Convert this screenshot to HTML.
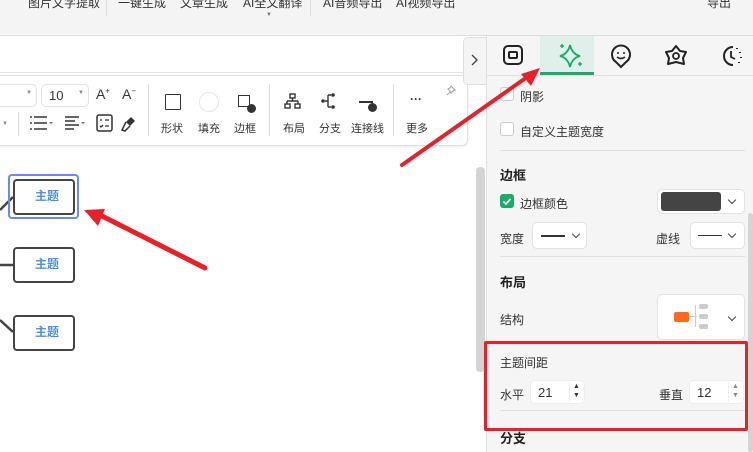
<!DOCTYPE html>
<html><head><meta charset="utf-8"><style>
*{margin:0;padding:0;box-sizing:border-box}
body{width:753px;height:452px;overflow:hidden;position:relative;background:#fff;font-family:"Liberation Sans","Noto Sans CJK SC",sans-serif;font-size:12px;color:#333}
.a{position:absolute}
.t{position:absolute;white-space:nowrap}
.sel{background:#fff;border:1px solid #e2e2e2;border-radius:5px}
.chev{position:absolute;width:6px;height:6px;border-right:1.5px solid #444;border-bottom:1.5px solid #444;transform:rotate(45deg)}
</style></head><body>
<div class="a" style="left:0;top:0;width:753px;height:36px;background:#f4f4f4;border-bottom:1px solid #ddd"></div>
<div class="t" style="left:28px;top:-6px;font-size:12px">图片文字提取</div>
<div class="a" style="left:106px;top:0;width:1px;height:16px;background:#ddd"></div>
<div class="t" style="left:118px;top:-6px">一键生成</div>
<div class="t" style="left:180px;top:-6px">文章生成</div>
<div class="t" style="left:243px;top:-6px">AI全文翻译</div>
<div class="t" style="left:266px;top:12px;font-size:6px;color:#777">▼</div>
<div class="a" style="left:310px;top:0;width:1px;height:16px;background:#ddd"></div>
<div class="t" style="left:323px;top:-6px">AI音频导出</div>
<div class="t" style="left:396px;top:-6px">AI视频导出</div>
<div class="t" style="left:707px;top:-6px">导出</div>

<div class="a" style="left:0;top:36px;width:486px;height:37px;background:#fff;border-bottom:1px solid #e4e4e4"></div>
<div class="a" style="left:-10px;top:75px;width:478px;height:71px;background:#fff;border:1px solid #e0e0e0;border-radius:6px;box-shadow:0 1px 3px rgba(0,0,0,.08)"></div>
<div class="sel a" style="left:-10px;top:84px;width:47px;height:23px"></div>
<div class="t" style="left:26px;top:90px;font-size:6px;color:#888">▼</div>
<div class="sel a" style="left:41px;top:84px;width:48px;height:23px"></div>
<div class="t" style="left:49px;top:88px;font-size:13px">10</div>
<div class="t" style="left:78px;top:90px;font-size:6px;color:#888">▼</div>
<div class="t" style="left:96px;top:86px;font-size:14px">A<sup style="font-size:8px">+</sup></div>
<div class="t" style="left:122px;top:86px;font-size:14px">A<sup style="font-size:8px">−</sup></div>
<div class="t" style="left:2px;top:121px;font-size:6px;color:#888">▼</div>
<div class="a" style="left:18px;top:112px;width:1px;height:24px;background:#ddd"></div>
<svg class="a" style="left:28px;top:112px" width="120" height="24">
<path d="M6 5h13M6 11h13M6 17h13" stroke="#333" stroke-width="1.6"/><path d="M3 4v2M3 10v2M3 16v2" stroke="#333" stroke-width="1.4"/><path d="M21 10l2 2 2-2z" fill="#666"/>
<path d="M37 5h14M37 9h10M37 13h14M37 17h9" stroke="#333" stroke-width="1.4"/><path d="M53 10l2 2 2-2z" fill="#666"/>
<rect x="69" y="3" width="15" height="16" rx="2" fill="none" stroke="#333" stroke-width="1.5"/><path d="M72 8h2M77 8h4M72 14l1 1 2-2M77 14h4" stroke="#333" stroke-width="1.3" fill="none"/>
<path d="M103 5l4 4-5 5-4-4z" fill="#333"/><path d="M98 10l-4 8 3 1 5-5" fill="none" stroke="#333" stroke-width="1.5"/>
</svg>
<div class="a" style="left:148px;top:84px;width:1px;height:52px;background:#ddd"></div>
<div class="a" style="left:165px;top:94px;width:16px;height:16px;border:1.5px solid #333;border-radius:1px"></div>
<div class="t" style="left:161px;top:120px;font-size:11px">形状</div>
<div class="a" style="left:199px;top:92px;width:20px;height:20px;border:1px solid #e5e5e5;border-radius:50%"></div>
<div class="t" style="left:198px;top:120px;font-size:11px">填充</div>
<div class="a" style="left:238px;top:95px;width:12px;height:12px;border:1.5px solid #333"></div>
<div class="a" style="left:247px;top:104px;width:9px;height:9px;background:#333;border-radius:50%"></div>
<div class="t" style="left:234px;top:120px;font-size:11px">边框</div>
<div class="a" style="left:269px;top:84px;width:1px;height:52px;background:#ddd"></div>
<svg class="a" style="left:280px;top:90px" width="100" height="22">
<rect x="10" y="4" width="5" height="4" fill="none" stroke="#333" stroke-width="1.4"/><path d="M12.5 8v3M7 11h11M7 11v3M18 11v3" stroke="#333" stroke-width="1.4" fill="none"/><rect x="5" y="14" width="5" height="4" fill="none" stroke="#333" stroke-width="1.4"/><rect x="15" y="14" width="5" height="4" fill="none" stroke="#333" stroke-width="1.4"/>
<circle cx="43" cy="11" r="1.8" fill="#333"/><path d="M45 11h3M48 5v12M48 5h3M48 17h3" stroke="#333" stroke-width="1.4" fill="none"/><circle cx="53" cy="5" r="1.8" fill="#333"/><circle cx="53" cy="17" r="1.8" fill="#333"/>
</svg>
<div class="t" style="left:283px;top:120px;font-size:11px">布局</div>
<div class="t" style="left:319px;top:120px;font-size:11px">分支</div>
<div class="a" style="left:359px;top:101px;width:14px;height:2px;background:#333"></div>
<div class="a" style="left:368px;top:103px;width:9px;height:9px;background:#333;border-radius:50%"></div>
<div class="t" style="left:351px;top:120px;font-size:11px">连接线</div>
<div class="a" style="left:393px;top:84px;width:1px;height:52px;background:#ddd"></div>
<div class="t" style="left:410px;top:92px;font-size:12px;font-weight:bold">···</div>
<div class="t" style="left:406px;top:120px;font-size:11px">更多</div>
<svg class="a" style="left:445px;top:84px" width="12" height="12"><path d="M6 2l4 4-2 1-2 2-1-1-3 3M6 2l-1 2-2 1 4 4" stroke="#aaa" stroke-width="1.2" fill="none"/></svg>

<div class="a" style="left:463px;top:37px;width:24px;height:48px;background:#f4f4f4;border:1px solid #ddd;border-radius:5px 0 0 5px"></div>
<svg class="a" style="left:469px;top:53px" width="10" height="14"><path d="M3 2l5 5-5 5" stroke="#444" stroke-width="1.4" fill="none"/></svg>

<svg class="a" style="left:0;top:150px" width="30" height="220"><path d="M0 60 L13 47" stroke="#444" stroke-width="2.5" fill="none"/><path d="M0 115 H14" stroke="#444" stroke-width="2.5"/><path d="M0 170 L13 182" stroke="#444" stroke-width="2.5" fill="none"/></svg>
<div class="a" style="left:8px;top:174px;width:71px;height:45px;border:2.5px solid #6b86f5;border-radius:4px"></div>
<div class="a" style="left:13px;top:179px;width:62px;height:36px;border:2px solid #444;border-radius:4px;background:#fff"></div>
<div class="t" style="left:35px;top:187px;color:#4a90e2;font-weight:bold;font-size:12px">主题</div>
<div class="a" style="left:13px;top:247px;width:62px;height:36px;border:2px solid #444;border-radius:4px;background:#fff"></div>
<div class="t" style="left:35px;top:255px;color:#4a90e2;font-weight:bold;font-size:12px">主题</div>
<div class="a" style="left:13px;top:315px;width:62px;height:36px;border:2px solid #444;border-radius:4px;background:#fff"></div>
<div class="t" style="left:35px;top:323px;color:#4a90e2;font-weight:bold;font-size:12px">主题</div>

<div class="a" style="left:476px;top:167px;width:9px;height:205px;background:#d4d4d4;border-radius:4px"></div>

<div class="a" style="left:486px;top:36px;width:267px;height:416px;background:#f5f5f5;border-left:1px solid #e0e0e0"></div>
<div class="a" style="left:486px;top:75px;width:267px;height:1px;background:#e0e0e0"></div>
<div class="a" style="left:540px;top:36px;width:54px;height:39px;background:#dff0ea;border-bottom:3px solid #1aaa6b"></div>
<svg class="a" style="left:486px;top:36px" width="267" height="39">
<rect x="18" y="10" width="18" height="18" rx="4" fill="none" stroke="#222" stroke-width="2"/><rect x="23" y="16" width="8" height="6" rx="1" fill="none" stroke="#222" stroke-width="2"/>
<path d="M84 9 Q86 18 94 20 Q86 22 84 31 Q82 22 74 20 Q82 18 84 9Z" fill="none" stroke="#1aaa6b" stroke-width="1.8"/><path d="M76 8v4M74 10h4M94 26v4M92 28h4" stroke="#1aaa6b" stroke-width="1.4"/>
<path d="M135 31 L130 26 A9 9 0 1 1 140 26 Z" fill="none" stroke="#222" stroke-width="2"/><circle cx="132" cy="17" r="1" fill="#222"/><circle cx="138" cy="17" r="1" fill="#222"/><path d="M131 21 Q135 24 139 21" stroke="#222" stroke-width="1.6" fill="none"/>
<path d="M190 10 L194 15 L200 16 L197 22 L198 28 L190 26 L182 28 L183 22 L180 16 L186 15Z" fill="none" stroke="#222" stroke-width="2" stroke-linejoin="round"/><circle cx="190" cy="20" r="3" fill="none" stroke="#222" stroke-width="1.8"/>
<path d="M247 11 A9 9 0 1 0 247 29" fill="none" stroke="#222" stroke-width="2"/><path d="M245 15v6l4 2" stroke="#222" stroke-width="1.8" fill="none"/><path d="M251 12v1M254 16v1M255 21v1M253 26v1" stroke="#222" stroke-width="2"/>
</svg>

<div class="a" style="left:500px;top:87px;width:14px;height:14px;border:1px solid #ccc;border-radius:3px;background:#fff"></div>
<div class="t" style="left:520px;top:88px">阴影</div>
<div class="a" style="left:500px;top:122px;width:14px;height:14px;border:1px solid #ccc;border-radius:3px;background:#fff"></div>
<div class="t" style="left:520px;top:123px">自定义主题宽度</div>
<div class="a" style="left:500px;top:150px;width:245px;height:1px;background:#e0e0e0"></div>
<div class="t" style="left:500px;top:165px;font-weight:bold;font-size:13px;color:#222">边框</div>
<div class="a" style="left:500px;top:194px;width:14px;height:14px;background:#1aaa6b;border-radius:3px"></div>
<svg class="a" style="left:500px;top:194px" width="14" height="14"><path d="M3.5 7.5l2.5 2.5 4.5-5" stroke="#fff" stroke-width="1.8" fill="none"/></svg>
<div class="t" style="left:520px;top:195px">边框颜色</div>
<div class="sel a" style="left:657px;top:189px;width:88px;height:25px"></div>
<div class="a" style="left:661px;top:192px;width:60px;height:19px;background:#444;border-radius:3px"></div>
<div class="chev" style="left:729px;top:197px"></div>
<div class="t" style="left:500px;top:230px">宽度</div>
<div class="sel a" style="left:532px;top:222px;width:55px;height:27px"></div>
<div class="a" style="left:541px;top:235px;width:24px;height:1.5px;background:#333"></div>
<div class="chev" style="left:573px;top:231px"></div>
<div class="t" style="left:656px;top:230px">虚线</div>
<div class="sel a" style="left:690px;top:222px;width:55px;height:27px"></div>
<div class="a" style="left:698px;top:235px;width:24px;height:1px;background:#333"></div>
<div class="chev" style="left:729px;top:231px"></div>
<div class="a" style="left:500px;top:256px;width:245px;height:1px;background:#e0e0e0"></div>
<div class="t" style="left:500px;top:272px;font-weight:bold;font-size:13px;color:#222">布局</div>
<div class="t" style="left:500px;top:311px">结构</div>
<div class="sel a" style="left:657px;top:294px;width:88px;height:46px"></div>
<div class="a" style="left:674px;top:312px;width:15px;height:10px;background:#ff6a1a;border-radius:2px"></div>
<div class="a" style="left:689px;top:316px;width:8px;height:1px;background:#ccc"></div>
<div class="a" style="left:695px;top:305px;width:1px;height:22px;background:#ccc"></div>
<div class="a" style="left:699px;top:304px;width:9px;height:5px;background:#ccc;border-radius:2px"></div>
<div class="a" style="left:699px;top:314px;width:9px;height:5px;background:#ccc;border-radius:2px"></div>
<div class="a" style="left:699px;top:324px;width:9px;height:5px;background:#ccc;border-radius:2px"></div>
<div class="chev" style="left:729px;top:314px"></div>
<div class="t" style="left:500px;top:354px">主题间距</div>
<div class="t" style="left:500px;top:386px">水平</div>
<div class="sel a" style="left:530px;top:380px;width:55px;height:24px;border-color:#eee"></div>
<div class="t" style="left:538px;top:385px;font-size:13px">21</div>
<div class="a" style="left:569px;top:382px;width:1px;height:20px;background:#eee"></div>
<div class="t" style="left:573px;top:382px;font-size:7px;line-height:9px">▲<br>▼</div>
<div class="t" style="left:659px;top:386px">垂直</div>
<div class="sel a" style="left:689px;top:380px;width:55px;height:24px;border-color:#eee"></div>
<div class="t" style="left:697px;top:385px;font-size:13px">12</div>
<div class="a" style="left:728px;top:382px;width:1px;height:20px;background:#eee"></div>
<div class="t" style="left:732px;top:382px;font-size:7px;line-height:9px;color:#888">▲<br>▼</div>
<div class="a" style="left:500px;top:410px;width:245px;height:1px;background:#e0e0e0"></div>
<div class="t" style="left:500px;top:428px;font-weight:bold;font-size:13px;color:#222">分支</div>
<div class="a" style="left:748px;top:213px;width:5px;height:239px;background:#d4d4d4;border-radius:3px"></div>

<div class="a" style="left:484px;top:341px;width:264px;height:90px;border:3px solid #e8202a;border-radius:2px"></div>
<svg class="a" style="left:0;top:0" width="753" height="452">
<path d="M205 268 L100 215" stroke="#e8202a" stroke-width="5" stroke-linecap="round"/>
<path d="M84 210 L105 209 L98 226Z" fill="#e8202a"/>
<path d="M402 165 L530 75" stroke="#e8202a" stroke-width="4" stroke-linecap="round"/>
<path d="M540 68 L521 74 L531 86Z" fill="#e8202a"/>
</svg>
</body></html>
